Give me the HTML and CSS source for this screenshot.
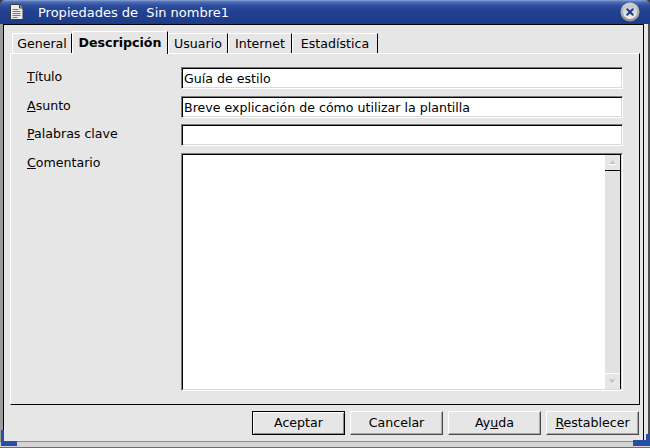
FILE: index.html
```html
<!DOCTYPE html>
<html lang="es">
<head>
<meta charset="utf-8">
<title>Propiedades de Sin nombre1</title>
<link rel="stylesheet" href="styles.css">
</head>
<body>
<div class="window">
  <div class="titlebar">
    <svg class="title-icon" width="14" height="16" viewBox="0 0 14 16">
      <path d="M0.5 0.5h9l3.5 3.5v11.5h-12.5z" fill="#ececec" stroke="#3a3a3a"/>
      <path d="M9.5 0.5v3.5h3.5" fill="#b8b8b8" stroke="#3a3a3a"/>
      <path d="M2.5 5.5h6M2.5 7.5h8M2.5 9.5h8M2.5 11.5h8M2.5 13.5h5" stroke="#7a7a7a"/>
    </svg>
    <span class="title">Propiedades de  Sin nombre1</span>
    <svg class="close" width="20" height="20" viewBox="0 0 20 20">
      <defs>
        <linearGradient id="ring" x1="0" y1="0" x2="0" y2="1">
          <stop offset="0" stop-color="#d6d6d6"/>
          <stop offset="1" stop-color="#8e8e8e"/>
        </linearGradient>
        <linearGradient id="face" x1="0" y1="0" x2="0" y2="1">
          <stop offset="0" stop-color="#c4c4c4"/>
          <stop offset="1" stop-color="#f2f2f2"/>
        </linearGradient>
      </defs>
      <circle cx="10" cy="10" r="9.5" fill="url(#ring)"/>
      <circle cx="10" cy="10" r="7" fill="url(#face)"/>
      <path d="M7.2 7.2l5.6 5.6M12.8 7.2l-5.6 5.6" stroke="#20408e" stroke-width="2" stroke-linecap="round"/>
    </svg>
  </div>
  <div class="frame">
    <div class="client">
      <div class="tabs">
        <div class="tab tab-general">General</div>
        <div class="tab tab-desc active">Descripción</div>
        <div class="tab tab-user">Usuario</div>
        <div class="tab tab-net">Internet</div>
        <div class="tab tab-stats">Estadística</div>
      </div>
      <div class="panel">
        <label class="label"><u>T</u>ítulo</label>
        <div class="field">Guía de estilo</div>
        <label class="label"><u>A</u>sunto</label>
        <div class="field">Breve explicación de cómo utilizar la plantilla</div>
        <label class="label"><u>P</u>alabras clave</label>
        <div class="field"></div>
        <label class="label"><u>C</u>omentario</label>
        <div class="memo">
          <div class="memo-inner">
            <div class="memo-text"></div>
            <div class="vscroll">
              <div class="sbtn up">
                <svg width="15" height="15" viewBox="0 0 15 15"><path d="M4 9.5l3.5-4 3.5 4z" fill="#c2c2c2"/><path d="M4 9.5h7" stroke="#fff"/></svg>
              </div>
              <div class="trough"></div>
              <div class="sbtn down">
                <svg width="15" height="15" viewBox="0 0 15 15"><path d="M4 5.5l3.5 4 3.5-4z" fill="#c2c2c2"/><path d="M7.5 9.8l3.5-4" stroke="#fff"/></svg>
              </div>
            </div>
          </div>
        </div>
      </div>
      <div class="buttons">
        <div class="btn default">Aceptar</div>
        <div class="btn">Cancelar</div>
        <div class="btn">Ay<u>u</u>da</div>
        <div class="btn"><u>R</u>establecer</div>
      </div>
    </div>
  </div>
  <div class="frame-bottom"></div>
  <div class="corner corner-left"></div>
  <div class="corner corner-right"></div>
</div>
</body>
</html>
```
FILE: styles.css
```css
* { box-sizing: border-box; }
html, body { margin: 0; padding: 0; }
body {
  width: 650px;
  height: 448px;
  overflow: hidden;
  background: #3a3a3a;
  font-family: "DejaVu Sans", "Noto Sans", sans-serif;
  font-size: 12.6px;
  color: #000;
}
.window {
  position: relative;
  width: 650px;
  height: 448px;
  display: flex;
  flex-direction: column;
}
.titlebar {
  flex: none;
  height: 24px;
  display: flex;
  align-items: center;
  padding: 0 10px;
  color: #fff;
  font-size: 13px;
  border-radius: 5px 5px 0 0;
  background: linear-gradient(to bottom, #8aa2d6 0, #4d6db5 2px, #2b4c9c 6px, #21418f 12px, #1c3b8a 24px);
}
.title-icon { flex: none; margin-right: 14px; }
.title { white-space: pre; }
.close { flex: none; margin-left: auto; }
.frame {
  flex: none;
  height: 417px;
  display: flex;
  flex-direction: column;
  background: #e6e6e6;
  border-left: 3px solid #9c9c9c;
  border-right: 2px solid #4e4e4e;
  padding-right: 4px;
}
.client {
  flex: 1;
  display: flex;
  flex-direction: column;
  border: 1px solid #000;
  border-bottom: none;
  padding: 6px 3px 6px 6px;
}
.tabs {
  flex: none;
  height: 22px;
  display: flex;
  align-items: flex-end;
  padding-left: 2px;
}
.tab {
  height: 20px;
  padding-top: 2px;
  line-height: 15px;
  text-align: center;
  white-space: nowrap;
  background: #e6e6e6;
  border-top: 1px solid #fff;
  border-left: 1px solid #fff;
  border-right: 1px solid #000;
}
.tab-general { width: 60px; }
.tab-desc { width: 96px; }
.tab-user { width: 60px; }
.tab-net { width: 64px; }
.tab-stats { width: 86px; }
.tab.active {
  position: relative;
  z-index: 1;
  height: 23px;
  margin-bottom: -1px;
  padding-top: 3px;
  font-weight: bold;
}
.panel {
  flex: none;
  height: 352px;
  border: 1px solid;
  border-color: #fff #000 #000 #fff;
  padding: 13px 16px 13px 16px;
  display: grid;
  grid-template-columns: 154px 1fr;
  grid-template-rows: 22px 22px 22px 1fr;
  row-gap: 6.67px;
}
.label {
  align-self: start;
  height: 22px;
  line-height: 19px;
  white-space: nowrap;
}
.field {
  height: 22px;
  background: #fff;
  border: 1px solid;
  border-color: #7c7c7c #fff #fff #7c7c7c;
  box-shadow: inset 1px 1px 0 #000, inset -1px -1px 0 #dadada;
  padding: 1px 2px;
  line-height: 20px;
  white-space: nowrap;
  overflow: hidden;
}
.memo {
  display: flex;
  background: #fff;
  border: 1px solid;
  border-color: #7c7c7c #fff #fff #7c7c7c;
}
.memo-inner {
  flex: 1;
  display: flex;
  border: 1px solid;
  border-color: #000 #dadada #dadada #000;
}
.memo-text { flex: 1; }
.vscroll {
  flex: none;
  width: 17px;
  display: flex;
  flex-direction: column;
  background: #e2e2e2;
  border-left: 1px solid #fff;
  border-right: 1px solid #000;
}
.sbtn {
  flex: none;
  height: 16px;
  display: flex;
  align-items: center;
  justify-content: center;
  background: #e6e6e6;
}
.sbtn.up { border-bottom: 1px solid #000; }
.sbtn.down { border-top: 1px solid #fff; }
.trough { flex: 1; }
.buttons {
  flex: none;
  margin-top: 6px;
  display: flex;
  justify-content: flex-end;
  gap: 5px;
  padding-right: 1px;
}
.btn {
  width: 93px;
  height: 24px;
  line-height: 22px;
  text-align: center;
  white-space: nowrap;
  background: #e6e6e6;
  border: 1px solid;
  border-color: #fff #4a4a4a #4a4a4a #fff;
  box-shadow: inset -1px -1px 0 #a8a8a8;
}
.btn.default {
  border-color: #000;
  box-shadow: inset 1px 1px 0 #fff, inset -1px -1px 0 #8a8a8a;
}
.frame-bottom {
  flex: none;
  height: 7px;
  background: #d4d4d4;
  border-top: 1px solid #8c8c8c;
  border-bottom: 1px solid #6e6e6e;
}
.corner {
  position: absolute;
  bottom: 2px;
  background: transparent;
}
.corner-left {
  left: 1px;
  width: 16px;
  height: 16px;
  border-left: 3px solid #2a4ea6;
  border-bottom: 5px solid #2a4ea6;
}
.corner-right {
  right: 0;
  width: 17px;
  height: 12px;
  border-right: 4px solid #2a4ea6;
  border-bottom: 6px solid #2a4ea6;
}
```
